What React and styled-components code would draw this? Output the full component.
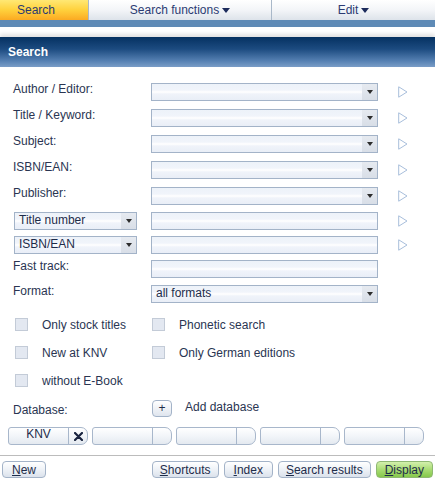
import React from 'react';
import styled, { createGlobalStyle } from 'styled-components';

const GlobalStyle = createGlobalStyle`
  html, body {
    margin: 0;
    padding: 0;
    background: #ffffff;
  }
  body {
    font-family: "Liberation Sans", Arial, sans-serif;
    font-size: 12px;
    color: #2a3552;
  }
  * { box-sizing: border-box; }
`;

const Page = styled.div`
  width: 435px;
  height: 482px;
  overflow: hidden;
  background: #fff;
`;

/* ---------- top menu ---------- */

const NavBar = styled.div`
  display: flex;
  height: 20px;
  background: linear-gradient(to bottom, #ffffff 0%, #f3f5f8 50%, #dde3ea 100%);
`;

const NavTab = styled.div`
  width: ${(p) => p.$width}px;
  display: flex;
  align-items: center;
  justify-content: ${(p) => (p.$active ? 'flex-start' : 'center')};
  padding-left: ${(p) => (p.$active ? '17px' : '0')};
  gap: 3px;
  color: #2b3b72;
  border-right: ${(p) => (p.$last ? 'none' : '1px solid #a9b8c9')};
  background: ${(p) =>
    p.$active ? 'linear-gradient(to bottom, #ffe874 0%, #ffd13c 50%, #fbaa22 100%)' : 'transparent'};
`;

const DownCaret = styled.span`
  width: 0;
  height: 0;
  border-left: 4px solid transparent;
  border-right: 4px solid transparent;
  border-top: 5px solid #1c2b5c;
  margin-top: 1px;
`;

const BlueStrip = styled.div`
  height: 7px;
  background: #5e8ab6;
`;

const PanelHeader = styled.div`
  margin-top: 10px;
  height: 30px;
  display: flex;
  align-items: center;
  padding-left: 8px;
  color: #ffffff;
  font-weight: bold;
  font-size: 12px;
  background: linear-gradient(to bottom, #053161 0%, #1c4b80 40%, #5681b3 80%, #7a9dc7 100%);
  box-shadow: 0 -3px 4px rgba(0, 0, 0, 0.12);
`;

/* ---------- form ---------- */

const Form = styled.div`
  padding: 16px 0 0 13px;
`;

const FieldRow = styled.div`
  display: grid;
  grid-template-columns: 138px 227px 29px;
  align-items: start;
  height: 18px;
  margin-top: ${(p) => p.$mt || 0}px;
`;

const Label = styled.div`
  line-height: 14px;
  margin-top: -1px;
  white-space: nowrap;
`;

const fieldBg = `
  background:
    linear-gradient(to bottom, rgba(255,255,255,0) 0%, rgba(255,255,255,0) 38%, #ffffff 50%, rgba(255,255,255,0) 62%),
    linear-gradient(to bottom, #edf2f9 0%, #f2f5fb 50%, #e9eef7 100%);
`;

const SelectBox = styled.div`
  width: ${(p) => p.$width || 227}px;
  height: 18px;
  margin-left: ${(p) => p.$ml || 0}px;
  border: 1px solid #a3b3c8;
  display: flex;
  ${fieldBg}
`;

const SelectValue = styled.div`
  flex: 1;
  padding-left: 4px;
  line-height: 15px;
  color: #1e2c4a;
  white-space: nowrap;
  overflow: hidden;
`;

const SelectButton = styled.div`
  width: 15px;
  display: flex;
  align-items: center;
  justify-content: center;
  background: linear-gradient(to bottom, #e6eaf0, #d8dee7);
  &::after {
    content: '';
    border-left: 3.5px solid transparent;
    border-right: 3.5px solid transparent;
    border-top: 4px solid #2c2c2c;
  }
`;

const TextBox = styled.div`
  width: 227px;
  height: 18px;
  border: 1px solid #a3b3c8;
  ${fieldBg}
`;

const GoArrow = styled.svg`
  width: 10px;
  height: 12px;
  margin: 3px 0 0 20px;
`;

const Go = () => (
  <GoArrow viewBox="0 0 10 12">
    <polygon points="0.7,0.8 9,6 0.7,11.2" fill="#ffffff" stroke="#a8bedb" strokeWidth="1" />
  </GoArrow>
);

const Select = ({ value, width, ml }) => (
  <SelectBox $width={width} $ml={ml}>
    <SelectValue>{value}</SelectValue>
    <SelectButton />
  </SelectBox>
);

/* ---------- checkboxes ---------- */

const Checks = styled.div`
  display: grid;
  grid-template-columns: 137px 1fr;
  row-gap: 15px;
  margin-top: 15px;
  padding-left: 2px;
`;

const CheckItem = styled.div`
  display: flex;
  align-items: center;
  gap: 14px;
  height: 13px;
  white-space: nowrap;
`;

const Box = styled.span`
  width: 13px;
  height: 13px;
  flex: none;
  border: 1px solid #c3cbd7;
  background: #e3e8f1;
`;

/* ---------- database ---------- */

const DbRow = styled.div`
  display: grid;
  grid-template-columns: 126px 20px 1fr;
  column-gap: 13px;
  margin-top: 12px;
  align-items: center;
  height: 17px;
`;

const DbLabel = styled.div`
  margin-top: 4px;
`;

const SmallButton = styled.div`
  height: 17px;
  border: 1px solid #a3b3c8;
  border-radius: 4px;
  background: linear-gradient(to bottom, #ffffff, #dfe5ee);
  display: flex;
  align-items: center;
  justify-content: center;
  color: #1e2c4a;
  font-size: 12px;
  line-height: 1;
`;

const AddText = styled.div`
  margin-top: -2px;
`;

const DbTabs = styled.div`
  display: flex;
  gap: 4px;
  padding-left: 8px;
  margin-top: 11px;
`;

const DbTab = styled.div`
  width: 80px;
  height: 18px;
  display: flex;
  border: 1px solid #a8b7cb;
  border-radius: 3px 7px 7px 3px;
  background: linear-gradient(to bottom, #ffffff 0%, #f2f5f9 50%, #e4e9f0 100%);
`;

const DbName = styled.div`
  width: 60px;
  border-right: 1px solid #a8b7cb;
  text-align: center;
  line-height: 12px;
  color: #1e2c4a;
`;

const DbClose = styled.div`
  flex: 1;
  display: flex;
  align-items: center;
  justify-content: center;
`;

/* ---------- footer ---------- */

const Footer = styled.div`
  margin-top: 10px;
  border-top: 1px solid #bcbcbc;
  padding: 5px 2px 0 2px;
  display: flex;
  gap: 5px;
`;

const Spacer = styled.div`
  flex: 1;
`;

const Button = styled.div`
  height: 17px;
  padding: 0 ${(p) => p.$px || 8}px;
  border: 1px solid ${(p) => (p.$primary ? '#8fb873' : '#a3b3c8')};
  border-radius: 4px;
  display: flex;
  align-items: center;
  color: #1e2c4a;
  white-space: nowrap;
  background: ${(p) =>
    p.$primary
      ? 'linear-gradient(to bottom, #d3f0ad 0%, #a9dc74 50%, #86c84b 100%)'
      : 'linear-gradient(to bottom, #ffffff 0%, #eef2f7 50%, #dbe2ec 100%)'};
  u { text-decoration: underline; }
`;

const rows = [
  { label: 'Author / Editor:', mt: 0 },
  { label: 'Title / Keyword:', mt: 8 },
  { label: 'Subject:', mt: 8 },
  { label: 'ISBN/EAN:', mt: 8 },
  { label: 'Publisher:', mt: 8 },
];

export default function App() {
  return (
    <Page>
      <GlobalStyle />
      <NavBar>
        <NavTab $width={89} $active>Search</NavTab>
        <NavTab $width={183}>
          Search functions <DownCaret />
        </NavTab>
        <NavTab $width={163} $last>
          Edit <DownCaret />
        </NavTab>
      </NavBar>
      <BlueStrip />
      <PanelHeader>Search</PanelHeader>

      <Form>
        {rows.map((r) => (
          <FieldRow key={r.label} $mt={r.mt}>
            <Label>{r.label}</Label>
            <Select />
            <Go />
          </FieldRow>
        ))}

        <FieldRow $mt={7}>
          <Select value="Title number" width={123} ml={1} />
          <TextBox />
          <Go />
        </FieldRow>
        <FieldRow $mt={6}>
          <Select value="ISBN/EAN" width={123} ml={1} />
          <TextBox />
          <Go />
        </FieldRow>
        <FieldRow $mt={6}>
          <Label>Fast track:</Label>
          <TextBox />
        </FieldRow>
        <FieldRow $mt={7}>
          <Label>Format:</Label>
          <Select value="all formats" />
        </FieldRow>

        <Checks>
          <CheckItem><Box />Only stock titles</CheckItem>
          <CheckItem><Box />Phonetic search</CheckItem>
          <CheckItem><Box />New at KNV</CheckItem>
          <CheckItem><Box />Only German editions</CheckItem>
          <CheckItem><Box />without E-Book</CheckItem>
        </Checks>

        <DbRow>
          <DbLabel>Database:</DbLabel>
          <SmallButton>+</SmallButton>
          <AddText>Add database</AddText>
        </DbRow>
      </Form>

      <DbTabs>
        <DbTab>
          <DbName>KNV</DbName>
          <DbClose>
            <svg width="9" height="9" viewBox="0 0 9 9">
              <path d="M1 1 L8 8 M8 1 L1 8" stroke="#1a2440" strokeWidth="2.2" strokeLinecap="round" />
            </svg>
          </DbClose>
        </DbTab>
        {[1, 2, 3, 4].map((i) => (
          <DbTab key={i}>
            <DbName />
            <DbClose />
          </DbTab>
        ))}
      </DbTabs>

      <Footer>
        <Button $px={9}><span><u>N</u>ew</span></Button>
        <Spacer />
        <Button $px={7}><span><u>S</u>hortcuts</span></Button>
        <Button $px={9}><span><u>I</u>ndex</span></Button>
        <Button $px={7}><span><u>S</u>earch results</span></Button>
        <Button $primary><span><u>D</u>isplay</span></Button>
      </Footer>
    </Page>
  );
}
